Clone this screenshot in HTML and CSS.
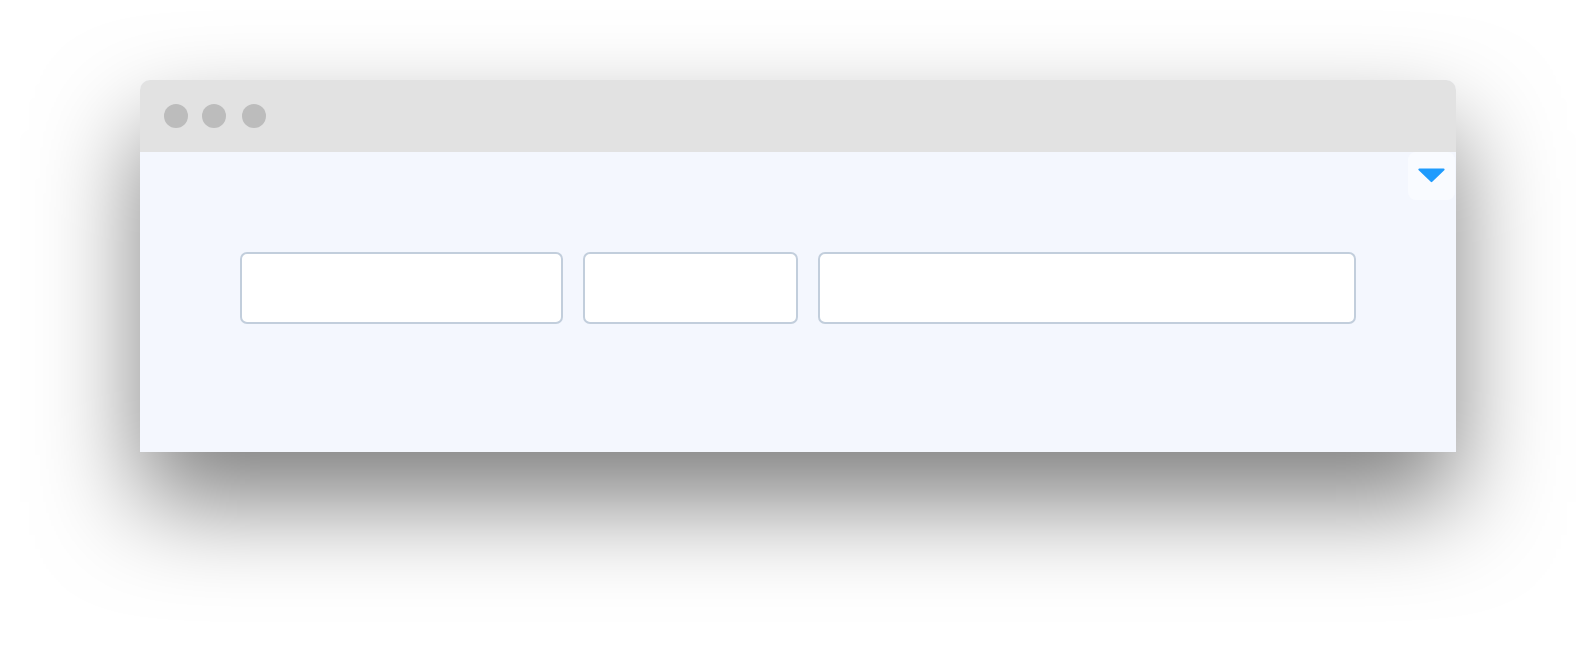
FILE: index.html
```html
<!DOCTYPE html>
<html>
<head>
<meta charset="utf-8">
<link rel="stylesheet" href="styles.css">
</head>
<body>
<div class="window">
  <div class="titlebar">
    <span class="dot dot-1"></span>
    <span class="dot dot-2"></span>
    <span class="dot dot-3"></span>
  </div>
  <div class="content">
    <div class="fields">
      <input class="field" type="text">
      <input class="field" type="text">
      <input class="field" type="text">
    </div>
    <button class="toggle" type="button" aria-label="Toggle">
      <svg width="27" height="15" viewBox="0 0 27 15"><path d="M1.5 1.5 L25.5 1.5 L13.5 13 Z" fill="#1f9bfd" stroke="#1f9bfd" stroke-width="2.2" stroke-linejoin="round"/></svg>
    </button>
  </div>
</div>
</body>
</html>
```
FILE: styles.css
```css
html, body {
  margin: 0;
  padding: 0;
  background: #ffffff;
}
body {
  width: 1596px;
  height: 652px;
  box-sizing: border-box;
  padding: 80px 140px 200px;
  font-family: "Liberation Sans", Arial, sans-serif;
  overflow: hidden;
}
.window {
  width: 1316px;
  height: 372px;
  display: flex;
  flex-direction: column;
  border-radius: 10px 10px 0 0;
  box-shadow: 0 50px 100px 0 rgba(0, 0, 0, 0.5);
  background: #f4f7fe;
}
.titlebar {
  height: 72px;
  flex: none;
  background: #e2e2e2;
  border-radius: 10px 10px 0 0;
  display: flex;
  align-items: center;
  padding-left: 24px;
}
.dot {
  width: 24px;
  height: 24px;
  border-radius: 50%;
  background: #bcbcbc;
}
.dot-2 { margin-left: 14px; }
.dot-3 { margin-left: 16px; }
.content {
  position: relative;
  flex: 1;
  padding: 100px 100px 0;
  background: #f4f7fe;
}
.fields {
  display: grid;
  grid-template-columns: minmax(0, 3fr) minmax(0, 2fr) minmax(0, 5fr);
  gap: 20px;
}
.field {
  box-sizing: border-box;
  width: 100%;
  height: 72px;
  min-width: 0;
  margin: 0;
  border: 2px solid #c2cedc;
  border-radius: 7px;
  background: #ffffff;
  outline: none;
  padding: 0 16px;
  font-size: 20px;
}
.toggle {
  position: absolute;
  top: 0;
  right: 1px;
  width: 47px;
  height: 48px;
  padding: 0;
  border: none;
  border-radius: 8px;
  background: #f9fbff;
  display: flex;
  align-items: center;
  justify-content: center;
}
.toggle svg {
  display: block;
  margin-top: -2px;
}
```
